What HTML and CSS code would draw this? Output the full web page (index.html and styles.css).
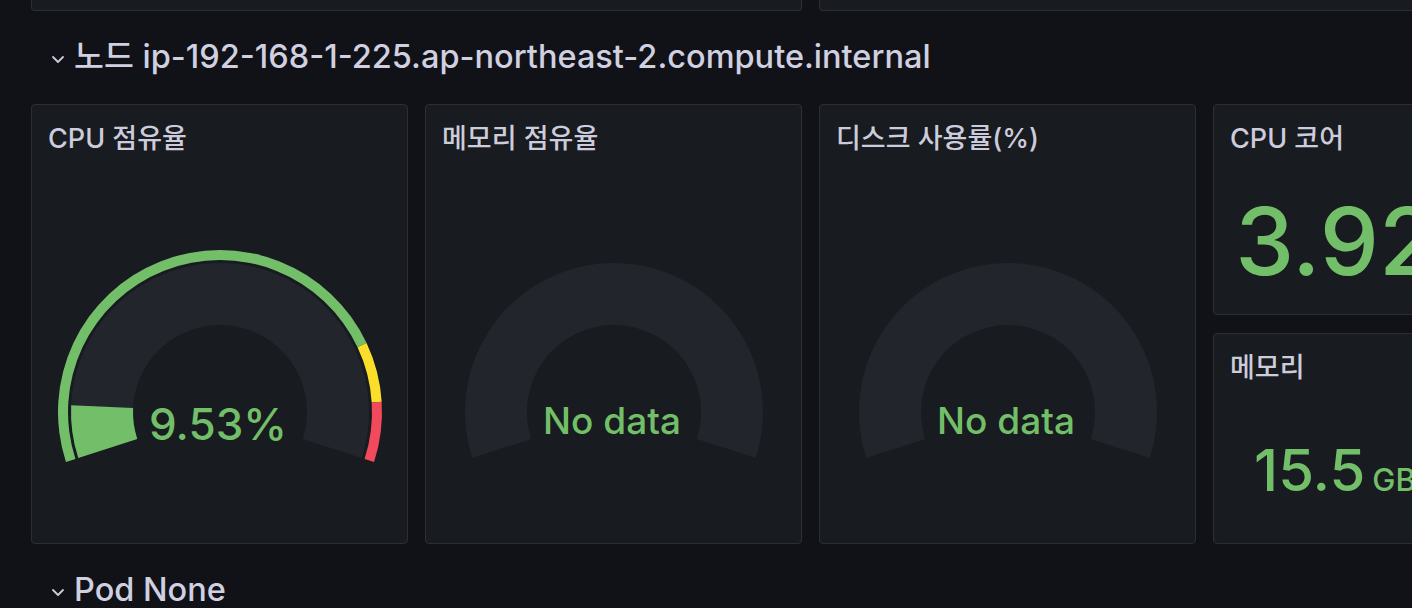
FILE: index.html
```html
<!DOCTYPE html>
<html lang="ko">
<head>
<meta charset="utf-8">
<title>Dashboard</title>
<link rel="stylesheet" href="styles.css">
</head>
<body>
<div class="dash">
  <div class="top-row">
    <div class="panel panel-cut panel-wide"></div>
    <div class="panel panel-cut panel-wide"></div>
  </div>

  <div class="row-header">
    <svg class="chevron" width="16" height="16" viewBox="0 0 16 16"><path d="M3 6 L8 11 L13 6" fill="none" stroke="#ccccdc" stroke-width="1.8" stroke-linecap="round" stroke-linejoin="round"/></svg>
    <span class="row-title">노드 ip-192-168-1-225.ap-northeast-2.compute.internal</span>
  </div>

  <div class="panel-row">
    <div class="panel gauge-panel">
      <div class="panel-header"><span class="panel-title">CPU 점유율</span></div>
      <div class="panel-body">
        <svg class="gauge" width="340" height="232" viewBox="0 0 340 232">
          <path d="M15.93 220.06 A162 162 0 0 1 316.58 101.02 L307.53 105.28 A152 152 0 0 0 25.44 216.97 Z" fill="#73bf69"/>
          <path d="M316.58 101.02 A162 162 0 0 1 331.68 159.83 L321.70 160.46 A152 152 0 0 0 307.53 105.28 Z" fill="#fade2a"/>
          <path d="M331.68 159.83 A162 162 0 0 1 324.07 220.06 L314.56 216.97 A152 152 0 0 0 321.70 160.46 Z" fill="#f2495c"/>
          <path d="M28.29 216.04 A149 149 0 1 1 311.71 216.04 L252.74 196.88 A87 87 0 1 0 87.26 196.88 Z" fill="#22252b"/>
          <path d="M28.29 216.04 A149 149 0 0 1 21.15 163.29 L83.09 166.08 A87 87 0 0 0 87.26 196.88 Z" fill="#73bf69"/>
          <text class="gauge-value" x="168" y="198" text-anchor="middle">9.53%</text>
        </svg>
      </div>
    </div>

    <div class="panel gauge-panel">
      <div class="panel-header"><span class="panel-title">메모리 점유율</span></div>
      <div class="panel-body">
        <svg class="gauge" width="340" height="232" viewBox="0 0 340 232">
          <path d="M28.29 216.04 A149 149 0 1 1 311.71 216.04 L252.74 196.88 A87 87 0 1 0 87.26 196.88 Z" fill="#22252b"/>
          <text class="gauge-nodata" x="168" y="192" text-anchor="middle">No data</text>
        </svg>
      </div>
    </div>

    <div class="panel gauge-panel">
      <div class="panel-header"><span class="panel-title">디스크 사용률(%)</span></div>
      <div class="panel-body">
        <svg class="gauge" width="340" height="232" viewBox="0 0 340 232">
          <path d="M28.29 216.04 A149 149 0 1 1 311.71 216.04 L252.74 196.88 A87 87 0 1 0 87.26 196.88 Z" fill="#22252b"/>
          <text class="gauge-nodata" x="168" y="192" text-anchor="middle">No data</text>
        </svg>
      </div>
    </div>

    <div class="stat-col">
      <div class="panel stat-panel">
        <div class="panel-header"><span class="panel-title">CPU 코어</span></div>
        <div class="stat-body"><span class="stat-value big">3.92</span></div>
      </div>
      <div class="panel stat-panel">
        <div class="panel-header"><span class="panel-title">메모리</span></div>
        <div class="stat-body"><span class="stat-value mid">15.5<span class="unit">GB</span></span></div>
      </div>
    </div>
  </div>

  <div class="row-header">
    <svg class="chevron" width="16" height="16" viewBox="0 0 16 16"><path d="M3 6 L8 11 L13 6" fill="none" stroke="#ccccdc" stroke-width="1.8" stroke-linecap="round" stroke-linejoin="round"/></svg>
    <span class="row-title">Pod None</span>
  </div>
</div>
</body>
</html>
```

FILE: styles.css
```css
* { box-sizing: border-box; }

html, body {
  margin: 0;
  padding: 0;
  background: #111217;
  overflow: hidden;
}

body {
  font-family: Inter, "Noto Sans CJK KR", sans-serif;
  color: #ccccdc;
  width: 1412px;
  height: 608px;
}

.dash {
  padding-left: 31px;
  display: flex;
  flex-direction: column;
  width: 1800px;
}

.top-row {
  display: flex;
  gap: 17px;
  height: 11px;
}

.panel {
  background: #181b1f;
  border: 1px solid #2c2e34;
  border-radius: 4px;
}

.panel-cut {
  border-top: none;
  border-radius: 0 0 4px 4px;
}

.panel-wide {
  width: 771px;
  flex: 0 0 771px;
}

.row-header {
  height: 93px;
  display: flex;
  align-items: center;
  gap: 8px;
  padding-left: 19px;
}

.chevron {
  flex: 0 0 16px;
  margin-top: 2px;
}

.row-title {
  font-size: 32.5px;
  line-height: 40px;
  font-weight: 500;
  color: #d0d0e0;
  margin-top: -1px;
}

.panel-row {
  display: flex;
  gap: 17px;
  height: 440px;
}

.gauge-panel {
  width: 377px;
  flex: 0 0 377px;
  display: flex;
  flex-direction: column;
}

.panel-header {
  height: 56px;
  padding: 18px 16px 0;
  line-height: 32px;
}

.panel-title {
  font-size: 27px;
  font-weight: 500;
  color: #ccccdc;
  white-space: nowrap;
}

.panel-body {
  flex: 1;
  display: flex;
  justify-content: center;
  align-items: flex-start;
  padding-top: 81px;
}

.gauge-value {
  font-family: Inter, sans-serif;
  font-size: 44px;
  font-weight: 500;
  fill: #73bf69;
}

.gauge-nodata {
  font-family: Inter, sans-serif;
  font-size: 37px;
  font-weight: 500;
  fill: #73bf69;
}

.stat-col {
  width: 252px;
  flex: 0 0 252px;
  display: flex;
  flex-direction: column;
  gap: 18px;
}

.stat-panel {
  flex: 1;
  display: flex;
  flex-direction: column;
}

.stat-body {
  flex: 1;
  display: flex;
  align-items: center;
  justify-content: center;
}

.stat-value {
  color: #73bf69;
  font-weight: 500;
  line-height: 1;
  white-space: nowrap;
}

.stat-value.big {
  font-size: 94px;
  margin-top: 6px;
  margin-left: -6px;
}

.stat-value.mid {
  font-size: 58px;
  margin-top: 6px;
  margin-left: -8px;
}

.unit {
  font-size: 31px;
  margin-left: 7px;
}
```
